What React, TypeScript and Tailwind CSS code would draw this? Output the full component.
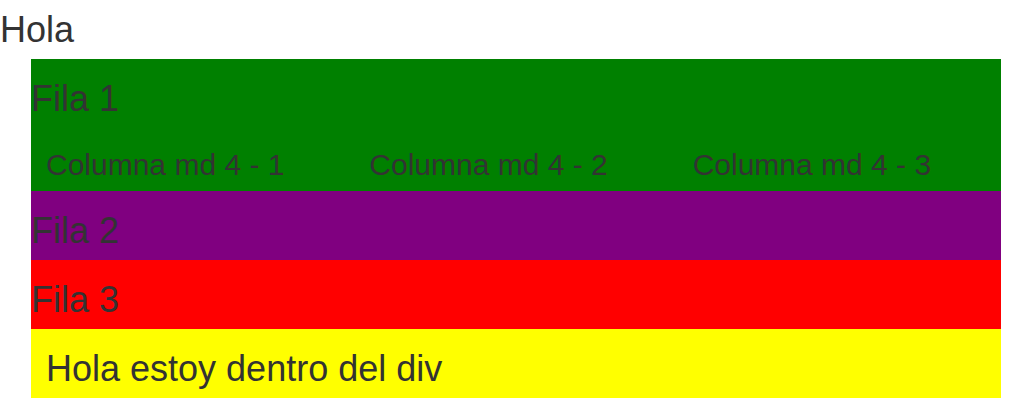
export default function App() {
  const heading = "text-[36px] leading-[39px] font-normal mt-[20px] mb-[10px]";
  return (
    <div className="bg-white min-h-screen text-[#333333] font-['Liberation_Sans',Arial,Helvetica,sans-serif]">
      <h1 className="text-[36px] leading-[39px] font-normal pt-[10px] pb-[10px]">Hola</h1>

      <div className="ml-[31px] w-[970px]">
        {/* Fila 1 con columnas */}
        <div className="bg-[#008000] flow-root">
          <h1 className={heading}>Fila 1</h1>
          <div className="grid grid-cols-3">
            {[1, 2, 3].map((n) => (
              <div key={n} className="px-[15px] flow-root">
                <h2 className="text-[30px] leading-[33px] font-normal mt-[20px] mb-[10px]">
                  Columna md 4 - {n}
                </h2>
              </div>
            ))}
          </div>
        </div>

        <div className="bg-[#800080] flow-root">
          <h1 className={heading}>Fila 2</h1>
        </div>

        <div className="bg-[#ff0000] flow-root">
          <h1 className={heading}>Fila 3</h1>
        </div>

        <div className="bg-[#ffff00] flow-root px-[15px]">
          <h1 className={heading}>Hola estoy dentro del div</h1>
        </div>
      </div>
    </div>
  );
}
